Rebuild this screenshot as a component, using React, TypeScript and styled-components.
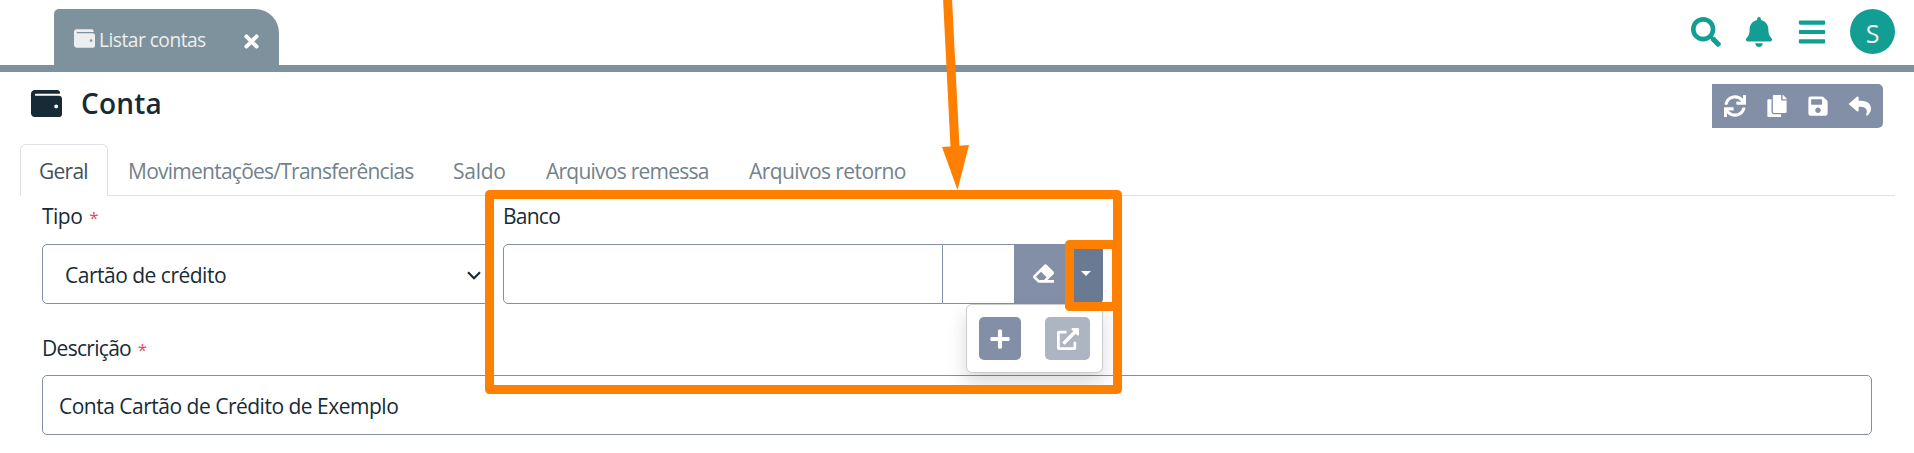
import React from "react";
import styled, { createGlobalStyle } from "styled-components";
import {
  FaBars,
  FaBell,
  FaCopy,
  FaEraser,
  FaExternalLinkAlt,
  FaPlus,
  FaReply,
  FaSave,
  FaSearch,
  FaSync,
  FaTimes,
  FaWallet,
} from "react-icons/fa";

const slate = "#838fa6";
const slateDark = "#6b7a93";
const steel = "#7d929d";
const teal = "#139e94";
const ink = "#172b36";
const orange = "#ff8000";

const GlobalStyle = createGlobalStyle`
  *, *::before, *::after { box-sizing: border-box; }
  body {
    margin: 0;
    background: #fff;
    color: ${ink};
    font: 400 21px/32px "Open Sans", "Noto Sans", sans-serif;
    overflow: hidden;
  }
  svg { display: block; flex: none; }
`;

const Page = styled.div`
  position: relative;
  height: 453px;
  overflow: hidden;
`;

const TopBar = styled.header`
  display: flex;
  justify-content: space-between;
  height: 72px;
  padding: 9px 19px 0 54px;
  border-bottom: 7px solid ${steel};
`;

const WindowTab = styled.div`
  display: flex;
  align-items: center;
  width: 225px;
  height: 56px;
  padding: 2px 17px 0 20px;
  border-radius: 5px 24px 0 0;
  background: ${steel};
  color: #eee;
`;

const WindowTitle = styled.span`
  flex: 1;
  margin: 3px 0 0 4px;
  font-size: 19.2px;
  letter-spacing: -0.52px;
  white-space: nowrap;
`;

const CloseIcon = styled(FaTimes)`
  margin-top: 7px;
  color: #fff;
`;

const HeaderActions = styled.div`
  display: flex;
  height: 46px;
  color: ${teal};
`;

const ActionIcon = styled.span<{ $width: number }>`
  display: flex;
  width: ${(p) => p.$width}px;
  padding-top: 8px;
`;

const Avatar = styled.span`
  display: flex;
  align-items: center;
  justify-content: center;
  width: 45px;
  height: 45px;
  padding-top: 2px;
  border-radius: 50%;
  background: ${teal};
  color: #eee;
  font-size: 25px;
`;

const TitleRow = styled.div`
  display: flex;
  justify-content: space-between;
  height: 72px;
  padding: 12px 31px 0;
`;

const Heading = styled.h1`
  display: flex;
  align-items: center;
  gap: 19px;
  height: 38px;
  margin: 0;
  font-size: 28px;
  font-weight: 600;
  letter-spacing: 0.2px;
`;

const Toolbar = styled.div`
  display: flex;
  width: 171px;
  height: 44px;
  padding: 0 2px;
  border-radius: 0 5px 5px 0;
  background: ${slate};
`;

const ToolButton = styled.button`
  display: flex;
  flex: 1;
  align-items: center;
  justify-content: center;
  padding: 0;
  border: 0;
  background: none;
  color: #fff;
`;

const Tabs = styled.nav`
  display: flex;
  height: 52px;
  margin: 0 19px 0 20px;
  border-bottom: 1px solid #dee2e6;
`;

const Tab = styled.a<{ $width: number; $spacing: number; $active?: boolean }>`
  width: ${(p) => p.$width}px;
  height: 52px;
  padding: 10px 0 0 ${(p) => (p.$active ? 18 : 19)}px;
  border: 1px solid ${(p) => (p.$active ? "#dee2e6" : "transparent")};
  border-bottom-color: ${(p) => (p.$active ? "#fff" : "transparent")};
  border-radius: 6px 6px 0 0;
  color: ${(p) => (p.$active ? "#495057" : "#72828c")};
  letter-spacing: ${(p) => p.$spacing}px;
  white-space: nowrap;
`;

const Form = styled.form`
  display: grid;
  grid-template-columns: 447px 600px;
  column-gap: 14px;
  padding: 0 42px;
`;

const Field = styled.div<{ $wide?: boolean }>`
  display: flex;
  flex-direction: column;
  height: 131px;
  ${(p) => p.$wide && "grid-column: 1 / -1; width: 1830px;"}
`;

const Label = styled.label<{ $spacing: number; $top?: number }>`
  height: 48px;
  padding-top: ${(p) => p.$top ?? 4}px;
  letter-spacing: ${(p) => p.$spacing}px;

  em {
    margin-left: 2px;
    color: #e64a5e;
    font-size: 17px;
    font-style: normal;
    line-height: 1;
  }
`;

const Control = styled.div<{ $indent: number }>`
  display: flex;
  align-items: center;
  justify-content: space-between;
  height: 60px;
  padding: 2px 7px 0 ${(p) => p.$indent}px;
  border: 1px solid ${slate};
  border-radius: 5px;
  letter-spacing: -0.5px;
`;

const InputGroup = styled.div`
  position: relative;
  display: flex;
  height: 60px;
`;

const InputCell = styled.div<{ $width: number; $first?: boolean }>`
  width: ${(p) => p.$width}px;
  border: 1px solid ${slate};
  border-left-width: ${(p) => (p.$first ? 1 : 0)}px;
  border-radius: ${(p) => (p.$first ? "5px 0 0 5px" : "0")};
`;

const GroupButton = styled.button<{ $width: number; $pressed?: boolean }>`
  display: flex;
  align-items: center;
  justify-content: center;
  width: ${(p) => p.$width}px;
  padding: 0 0 2px ${(p) => (p.$pressed ? 0 : 2)}px;
  border: 0;
  border-radius: ${(p) => (p.$pressed ? "0 5px 5px 0" : "0")};
  background: ${(p) => (p.$pressed ? slateDark : slate)};
  color: #fff;
`;

const Caret = styled.span`
  margin-right: 1px;
  border: 5px solid transparent;
  border-top-color: #fff;
  border-bottom: 0;
`;

const DropMenu = styled.div`
  position: absolute;
  top: 60px;
  right: 0;
  display: flex;
  justify-content: space-between;
  width: 137px;
  height: 69px;
  padding: 12px;
  border: 1px solid #ccc;
  border-radius: 6px;
  background: #fff;
  box-shadow: 0 10px 19px rgba(0, 0, 0, 0.15);
`;

const MenuButton = styled.button<{ $width: number; $disabled?: boolean }>`
  display: flex;
  align-items: center;
  justify-content: center;
  width: ${(p) => p.$width}px;
  height: 43px;
  padding: 0;
  border: 0;
  border-radius: 5px;
  background: ${(p) => (p.$disabled ? "#adb4c2" : slate)};
  color: #fff;
`;

const Annotations = styled.svg`
  position: absolute;
  inset: 0;
  pointer-events: none;
`;

const tabs = [
  { text: "Geral", width: 88, spacing: -0.75, active: true },
  { text: "Movimentações/Transferências", width: 325, spacing: -0.75 },
  { text: "Saldo", width: 93, spacing: -0.25 },
  { text: "Arquivos remessa", width: 203, spacing: -0.76 },
  { text: "Arquivos retorno", width: 197, spacing: -0.58 },
];

export default function App() {
  return (
    <Page>
      <GlobalStyle />
      <TopBar>
        <WindowTab>
          <FaWallet size={21} />
          <WindowTitle>Listar contas</WindowTitle>
          <CloseIcon size={21} />
        </WindowTab>
        <HeaderActions>
          <ActionIcon $width={53}><FaSearch size={30} /></ActionIcon>
          <ActionIcon $width={53}><FaBell size={30} /></ActionIcon>
          <ActionIcon $width={53}><FaBars size={30} /></ActionIcon>
          <Avatar>S</Avatar>
        </HeaderActions>
      </TopBar>

      <TitleRow>
        <Heading>
          <FaWallet size={31} />
          Conta
        </Heading>
        <Toolbar>
          <ToolButton><FaSync size={22} /></ToolButton>
          <ToolButton><FaCopy size={22} /></ToolButton>
          <ToolButton><FaSave size={22} /></ToolButton>
          <ToolButton><FaReply size={22} /></ToolButton>
        </Toolbar>
      </TitleRow>

      <Tabs>
        {tabs.map((t) => (
          <Tab key={t.text} $width={t.width} $spacing={t.spacing} $active={t.active}>
            {t.text}
          </Tab>
        ))}
      </Tabs>

      <Form>
        <Field>
          <Label $spacing={-0.5}>Tipo <em>*</em></Label>
          <Control $indent={22}>
            Cartão de crédito
            <svg width="14" height="9" viewBox="0 0 14 9" fill="none" stroke={ink} strokeWidth="2.2">
              <path d="M1 1.2 7 7.2 13 1.2" />
            </svg>
          </Control>
        </Field>
        <Field>
          <Label $spacing={-0.75}>Banco</Label>
          <InputGroup>
            <InputCell $width={440} $first />
            <InputCell $width={72} />
            <GroupButton $width={55}><FaEraser size={21} /></GroupButton>
            <GroupButton $width={33} $pressed><Caret /></GroupButton>
            <DropMenu>
              <MenuButton $width={42}><FaPlus size={22} /></MenuButton>
              <MenuButton $width={45} $disabled><FaExternalLinkAlt size={22} /></MenuButton>
            </DropMenu>
          </InputGroup>
        </Field>
        <Field $wide>
          <Label $spacing={-0.7} $top={5}>Descrição <em>*</em></Label>
          <Control $indent={16}>Conta Cartão de Crédito de Exemplo</Control>
        </Field>
      </Form>

      <Annotations width="1914" height="453" fill="none" stroke={orange}>
        <path d="M947.5 -2 955 147" strokeWidth="9" />
        <path d="M942 147 969 145 957.5 190Z" fill={orange} stroke="none" />
        <rect x="489.5" y="194.5" width="628" height="195" strokeWidth="9" strokeLinejoin="round" />
        <rect x="1069.5" y="244.5" width="47" height="62" strokeWidth="9" strokeLinejoin="round" />
      </Annotations>
    </Page>
  );
}
